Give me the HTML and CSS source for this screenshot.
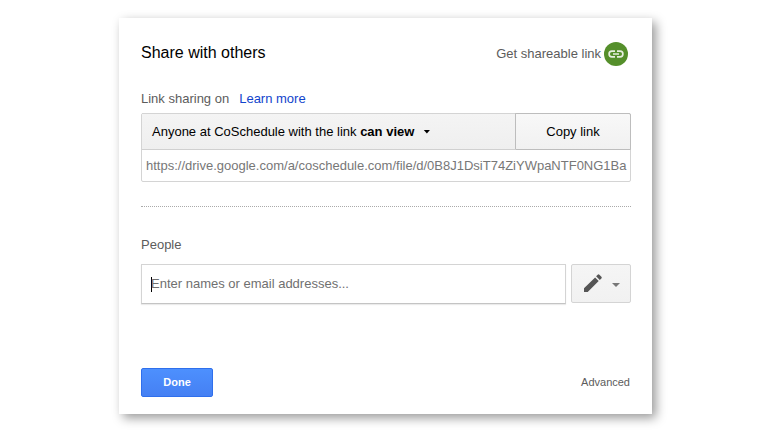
FILE: index.html
```html
<!DOCTYPE html>
<html lang="en">
<head>
    <meta charset="UTF-8">
    <meta name="viewport" content="width=device-width, initial-scale=1.0">
    <title>Share with others</title>
    <link rel="stylesheet" href="styles.css">
</head>
<body>
    <div class="dialog">
        <div class="header">
            <h1>Share with others</h1>
            <div class="shareable">
                <span>Get shareable link</span>
                <svg class="link-icon" width="24" height="24" viewBox="0 0 24 24">
                    <circle cx="12" cy="12" r="12" fill="#558f2b"/>
                    <path d="M11 9.2H7.9a2.8 2.8 0 0 0 0 5.6H11M13 9.2h3.1a2.8 2.8 0 0 1 0 5.6H13M9 12h6" fill="none" stroke="#e6eede" stroke-width="1.7"/>
                </svg>
            </div>
        </div>

        <div class="sharing-label">
            <span>Link sharing on</span>
            <a href="#">Learn more</a>
        </div>
        <div class="link-box">
            <div class="link-row">
                <div class="permission">
                    <span>Anyone at CoSchedule with the link <b>can view</b></span>
                    <span class="arrow"></span>
                </div>
                <button class="copy">Copy link</button>
            </div>
            <div class="url">https://drive.google.com/a/coschedule.com/file/d/0B8J1DsiT74ZiYWpaNTF0NG1Ba</div>
        </div>

        <div class="divider"></div>

        <div class="people-label">People</div>
        <div class="people-row">
            <div class="people-input"><span class="caret"></span><span>Enter names or email addresses...</span></div>
            <button class="edit">
                <svg class="pencil" width="20" height="20" viewBox="0 0 20 20" fill="#555">
                    <path d="M1 19v-3.7L12.1 4.4l3.6 3.6L4.7 19zM13.1 3.3l1.6-1.6a1.2 1.2 0 0 1 1.7 0l2 2a1.2 1.2 0 0 1 0 1.7L16.8 7z"/>
                </svg>
                <span class="arrow"></span>
            </button>
        </div>

        <div class="footer">
            <button class="done">Done</button>
            <span class="advanced">Advanced</span>
        </div>
    </div>
</body>
</html>
```
FILE: styles.css
```css
* {
    box-sizing: border-box;
}

body {
    margin: 0;
    height: 433px;
    overflow: hidden;
    background-color: #fff;
    font-family: "Liberation Sans", Arial, sans-serif;
    font-size: 13px;
    line-height: 16px;
    color: #5c5c5c;
}

.dialog {
    width: 533px;
    height: 396px;
    margin: 18px 0 0 119px;
    padding: 24px 21px 0 22px;
    background-color: #fff;
    box-shadow: 4px 4px 10px rgba(0, 0, 0, 0.4);
}

.header {
    display: flex;
    justify-content: space-between;
    align-items: center;
    height: 24px;
}

h1 {
    margin: 0;
    padding-bottom: 3px;
    font-size: 16px;
    font-weight: normal;
    color: #000;
}

.shareable {
    display: flex;
    align-items: center;
    gap: 3px;
    padding-right: 3px;
}

.link-icon {
    display: block;
}

.sharing-label {
    display: flex;
    gap: 10px;
    margin-top: 25px;
}

.sharing-label a {
    color: #1144cc;
    text-decoration: none;
}

.link-box {
    height: 69px;
    margin-top: 6px;
    border: 1px solid #d4d4d4;
    border-radius: 2px;
}

.link-row {
    display: flex;
    height: 37px;
    margin: -1px -1px 0 0;
}

.permission {
    flex: 1;
    display: flex;
    align-items: center;
    gap: 9px;
    padding-left: 10px;
    border-top: 1px solid #d4d4d4;
    border-bottom: 1px solid #d0d0d0;
    background: linear-gradient(#f4f4f4, #efefef);
    color: #000;
}

.arrow {
    width: 7px;
    height: 4px;
    background-color: currentColor;
    clip-path: polygon(0 0, 100% 0, 50% 100%);
}

button {
    margin: 0;
    padding: 0;
    border: 1px solid #d4d4d4;
    font: inherit;
}

.copy {
    width: 116px;
    border-color: #bdbdbd;
    border-radius: 0 2px 0 0;
    background: linear-gradient(#f8f8f8, #f1f1f1);
    color: #000;
}

.url {
    padding: 8px 0 0 4px;
    white-space: nowrap;
    color: #777;
}

.divider {
    margin-top: 24px;
    border-top: 1px dotted #aaa;
}

.people-label {
    margin-top: 30px;
}

.people-row {
    display: flex;
    gap: 5px;
    margin-top: 11px;
}

.people-input {
    display: flex;
    align-items: center;
    width: 425px;
    height: 40px;
    padding-left: 9px;
    border: 1px solid #d4d4d4;
    border-bottom-color: #c4c4c4;
    box-shadow: 0 1px 1px rgba(0, 0, 0, 0.08);
    color: #707070;
}

.caret {
    width: 1px;
    height: 15px;
    margin-right: -1px;
    background-color: #000;
}

.edit {
    display: flex;
    align-items: center;
    justify-content: space-between;
    width: 60px;
    height: 39px;
    padding: 0 10px 0 11px;
    border-radius: 2px;
    background: linear-gradient(#f5f5f5, #f1f1f1);
    color: #777;
}

.edit .arrow {
    width: 8px;
    margin-top: 3px;
}

.pencil {
    margin-bottom: 2px;
}

.footer {
    display: flex;
    justify-content: space-between;
    align-items: center;
    margin-top: 64px;
}

.done {
    width: 72px;
    height: 29px;
    padding-bottom: 2px;
    border-color: #2f6fec;
    border-radius: 2px;
    background: linear-gradient(#4d90fe, #4580f3);
    color: #fff;
    font-size: 11px;
    font-weight: bold;
}

.advanced {
    padding: 0 1px 2px 0;
    font-size: 11px;
}
```
